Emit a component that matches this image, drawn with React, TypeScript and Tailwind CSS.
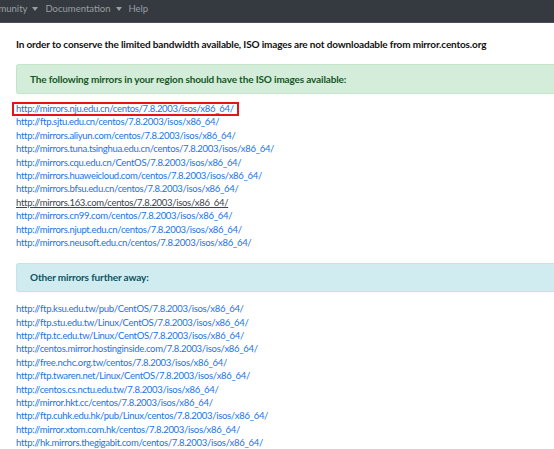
import React from "react";

const near = [
  "http://mirrors.nju.edu.cn/centos/7.8.2003/isos/x86_64/",
  "http://ftp.sjtu.edu.cn/centos/7.8.2003/isos/x86_64/",
  "http://mirrors.aliyun.com/centos/7.8.2003/isos/x86_64/",
  "http://mirrors.tuna.tsinghua.edu.cn/centos/7.8.2003/isos/x86_64/",
  "http://mirrors.cqu.edu.cn/CentOS/7.8.2003/isos/x86_64/",
  "http://mirrors.huaweicloud.com/centos/7.8.2003/isos/x86_64/",
  "http://mirrors.bfsu.edu.cn/centos/7.8.2003/isos/x86_64/",
  "http://mirrors.163.com/centos/7.8.2003/isos/x86_64/",
  "http://mirrors.cn99.com/centos/7.8.2003/isos/x86_64/",
  "http://mirrors.njupt.edu.cn/centos/7.8.2003/isos/x86_64/",
  "http://mirrors.neusoft.edu.cn/centos/7.8.2003/isos/x86_64/",
];

const far = [
  "http://ftp.ksu.edu.tw/pub/CentOS/7.8.2003/isos/x86_64/",
  "http://ftp.stu.edu.tw/Linux/CentOS/7.8.2003/isos/x86_64/",
  "http://ftp.tc.edu.tw/Linux/CentOS/7.8.2003/isos/x86_64/",
  "http://centos.mirror.hostinginside.com/7.8.2003/isos/x86_64/",
  "http://free.nchc.org.tw/centos/7.8.2003/isos/x86_64/",
  "http://ftp.twaren.net/Linux/CentOS/7.8.2003/isos/x86_64/",
  "http://centos.cs.nctu.edu.tw/7.8.2003/isos/x86_64/",
  "http://mirror.hkt.cc/centos/7.8.2003/isos/x86_64/",
  "http://ftp.cuhk.edu.hk/pub/Linux/centos/7.8.2003/isos/x86_64/",
  "http://mirror.xtom.com.hk/centos/7.8.2003/isos/x86_64/",
  "http://hk.mirrors.thegigabit.com/centos/7.8.2003/isos/x86_64/",
];

function Caret() {
  return <span className="ml-[5px] inline-block border-x-[3px] border-t-[4px] border-x-transparent border-t-[#9a9da1] align-middle" />;
}

function LinkList({ links }: { links: string[] }) {
  return (
    <ul className="flex flex-col text-[9.5px] tracking-[-0.3px]">
      {links.map((l) => {
        const boxed = l.includes("nju.edu");
        const hovered = l.includes("163.com");
        return (
          <li key={l} className="h-[13.4px] leading-[13.4px]">
            <a
              href="#"
              className={`${hovered ? "text-[#3c4450] underline" : "text-[#1a73e8]"} ${
                boxed ? "-ml-[4px] inline-block border-2 border-[#e5141b] pl-[2px] pr-[3px] leading-[10px]" : ""
              }`}
            >
              {l}
            </a>
          </li>
        );
      })}
    </ul>
  );
}

export default function App() {
  return (
    <div className="h-[449px] w-[554px] overflow-hidden bg-white text-[10px] font-['Lato',sans-serif]">
      <nav className="flex h-[23px] items-center gap-[7px] border-b border-[#4a4f55] bg-[#353a41] pb-[4px] text-[9.5px] text-[#9a9da1]">
        <span className="-ml-[21px]">
          Community
          <Caret />
        </span>
        <span>
          Documentation
          <Caret />
        </span>
        <span>Help</span>
      </nav>

      <div className="pl-[16px]">
        <p className="mt-[14px] whitespace-nowrap font-bold tracking-[-0.15px] text-[#111]">
          In order to conserve the limited bandwidth available, ISO images are not downloadable from mirror.centos.org
        </p>

        <div className="mt-[12px] flex h-[30px] items-center rounded-l-[3px] border border-r-0 border-[#c3e6cb] bg-[#d4edda] pl-[13px] font-bold tracking-[-0.15px] text-[#155724]">
          The following mirrors in your region should have the ISO images available:
        </div>

        <div className="mt-[8px]">
          <LinkList links={near} />
        </div>

        <div className="mt-[14px] flex h-[29px] items-center rounded-l-[3px] border border-r-0 border-[#bee5eb] bg-[#d1ecf1] pl-[13px] font-bold tracking-[-0.15px] text-[#0c5460]">
          Other mirrors further away:
        </div>

        <div className="mt-[10px]">
          <LinkList links={far} />
        </div>
      </div>
    </div>
  );
}
